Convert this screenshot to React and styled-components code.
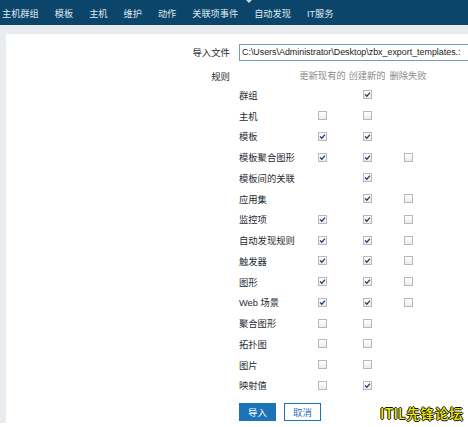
import React from "react";
import styled, { createGlobalStyle } from "styled-components";

const Global = createGlobalStyle`
  html, body { margin: 0; padding: 0; background: #fff; }
  body { font-family: "Liberation Sans", "Noto Sans CJK SC", sans-serif; }
`;

const Page = styled.div`
  position: relative;
  width: 468px;
  height: 427px;
  overflow: hidden;
  background: #fff;
`;

const Nav = styled.nav`
  position: relative;
  height: 25px;
  background: #0b456a;
  display: flex;
  align-items: center;
  gap: 16px;
  padding-left: 2px;
`;

const NavItem = styled.span`
  color: #dfe7ee;
  font-size: 9.2px;
  white-space: nowrap;
`;

const Notch = styled.span`
  position: absolute;
  top: 0;
  left: 246px;
  width: 0;
  height: 0;
  border-left: 3px solid transparent;
  border-right: 3px solid transparent;
  border-top: 3px solid #c9d6e0;
`;

const Main = styled.main`
  height: 398px;
  background: #e9ecef;
  padding: 9px 0 0 6px;
  box-sizing: border-box;
  display: flex;
`;

const Panel = styled.section`
  flex: 1;
  background: #fff;
  padding-top: 10px;
  display: grid;
  grid-template-columns: 224px 1fr;
  column-gap: 9px;
  row-gap: 6.6px;
  align-content: start;
`;

const FieldLabel = styled.div`
  text-align: right;
  font-size: 9.4px;
  color: #1f2c33;
  line-height: 17px;
  align-self: ${(p) => p.$align || "center"};
`;

const FileInput = styled.div`
  height: 17px;
  box-sizing: border-box;
  border: 1px solid #6f9ccb;
  border-right: none;
  padding-left: 2px;
  font-size: 8.9px;
  line-height: 15px;
  color: #222;
  white-space: nowrap;
  overflow: hidden;
`;

const Rules = styled.div`
  display: grid;
  grid-template-columns: 60px 47px 42px 40px;
  grid-template-rows: 17px;
  grid-auto-rows: 20.76px;
  align-items: center;
`;

const HeadRow = styled.div`
  display: contents;
`;

const HeadCell = styled.div`
  font-size: 9.3px;
  color: #8b8b8b;
  text-align: center;
  white-space: nowrap;
  line-height: 17px;
`;

const RowLabel = styled.div`
  font-size: 9.3px;
  color: #1f2c33;
  white-space: nowrap;
`;

const Cell = styled.div`
  display: flex;
  justify-content: center;
`;

const Box = styled.span`
  width: 9px;
  height: 9px;
  box-sizing: border-box;
  border: 1px solid #b9b9b9;
  background: linear-gradient(#ffffff, #ececec);
  display: flex;
  align-items: center;
  justify-content: center;
`;

const Buttons = styled.div`
  grid-column: 2;
  display: flex;
  gap: 8px;
  margin-top: 1px;
`;

const Button = styled.button`
  height: 18px;
  width: 37px;
  padding: 0;
  box-sizing: border-box;
  font-family: "Liberation Sans", "Noto Sans CJK SC", sans-serif;
  font-size: 9.4px;
  border: 1px solid #1c74b7;
  background: ${(p) => (p.$primary ? "#1c74b7" : "#fff")};
  color: ${(p) => (p.$primary ? "#fff" : "#1c74b7")};
`;

const Watermark = styled.div`
  position: absolute;
  left: 380px;
  top: 405px;
  font-family: "Noto Sans CJK SC", sans-serif;
  font-size: 14px;
  line-height: 16px;
  font-weight: 500;
  color: #f0ec00;
  letter-spacing: 0.3px;
  text-shadow: -1px 0 #111, 1px 0 #111, 0 -1px #111, 0 1px #111;
  white-space: nowrap;
`;

const Check = () => (
  <svg width="7" height="7" viewBox="0 0 7 7">
    <path d="M1 3.4 L2.8 5.2 L6 1.6" fill="none" stroke="#1d3f6e" strokeWidth="1.3" />
  </svg>
);

const CheckBox = ({ on }) => <Box>{on ? <Check /> : null}</Box>;

const rows = [
  ["群组", null, true, null],
  ["主机", false, false, null],
  ["模板", true, true, null],
  ["模板聚合图形", true, true, false],
  ["模板间的关联", null, true, null],
  ["应用集", null, true, false],
  ["监控项", true, true, false],
  ["自动发现规则", true, true, false],
  ["触发器", true, true, false],
  ["图形", true, true, false],
  ["Web 场景", true, true, false],
  ["聚合图形", false, false, null],
  ["拓扑图", false, false, null],
  ["图片", false, false, null],
  ["映射值", false, true, null],
];

const navItems = ["主机群组", "模板", "主机", "维护", "动作", "关联项事件", "自动发现", "IT服务"];

export default function App() {
  return (
    <Page>
      <Global />
      <Nav>
        {navItems.map((n) => (
          <NavItem key={n}>{n}</NavItem>
        ))}
        <Notch />
      </Nav>
      <Main>
        <Panel>
          <FieldLabel>导入文件</FieldLabel>
          <FileInput>C:\Users\Administrator\Desktop\zbx_export_templates.:</FileInput>
          <FieldLabel $align="start">规则</FieldLabel>
          <Rules>
            <HeadRow>
              <span />
              <HeadCell>更新现有的</HeadCell>
              <HeadCell>创建新的</HeadCell>
              <HeadCell>删除失败</HeadCell>
            </HeadRow>
            {rows.map(([label, a, b, c]) => (
              <React.Fragment key={label}>
                <RowLabel>{label}</RowLabel>
                <Cell>{a !== null && <CheckBox on={a} />}</Cell>
                <Cell>{b !== null && <CheckBox on={b} />}</Cell>
                <Cell>{c !== null && <CheckBox on={c} />}</Cell>
              </React.Fragment>
            ))}
          </Rules>
          <Buttons>
            <Button $primary>导入</Button>
            <Button>取消</Button>
          </Buttons>
        </Panel>
      </Main>
      <Watermark>ITIL先锋论坛</Watermark>
    </Page>
  );
}
